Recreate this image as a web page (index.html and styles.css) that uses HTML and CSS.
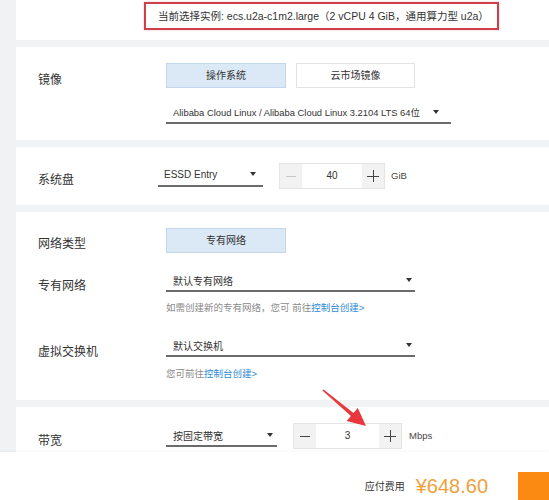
FILE: index.html
```html
<!DOCTYPE html>
<html lang="zh-CN">
<head>
<meta charset="utf-8">
<title>ECS 配置</title>
<link rel="stylesheet" href="styles.css">
</head>
<body>
<div class="page">
  <section class="panel p-current">
    <div class="current">当前选择实例: ecs.u2a-c1m2.large（2 vCPU 4 GiB，通用算力型 u2a）</div>
  </section>

  <section class="panel p-image">
    <div class="row">
      <div class="label l-image">镜像</div>
      <div class="ctrl">
        <div class="tabs">
          <span class="tab active">操作系统</span>
          <span class="tab">云市场镜像</span>
        </div>
        <div class="select s-os"><span>Alibaba Cloud Linux / Alibaba Cloud Linux 3.2104 LTS 64位</span><i class="caret"></i></div>
      </div>
    </div>
  </section>

  <section class="panel p-disk">
    <div class="row">
      <div class="label l-disk">系统盘</div>
      <div class="ctrl inline">
        <div class="select s-disk"><span>ESSD Entry</span><i class="caret"></i></div>
        <div class="stepper st-disk">
          <span class="btn minus disabled"><svg width="10" height="10" viewBox="0 0 10 10"><path d="M0 5.5H10" stroke="currentColor" stroke-width="1"/></svg></span>
          <span class="val">40</span>
          <span class="btn plus"><svg width="12" height="12" viewBox="0 0 12 12"><path d="M0 6.5H12M6.5 0V12" stroke="currentColor" stroke-width="1"/></svg></span>
        </div>
        <span class="unit">GiB</span>
      </div>
    </div>
  </section>

  <section class="panel p-net">
    <div class="row">
      <div class="label l-nettype">网络类型</div>
      <div class="ctrl">
        <div class="tabs"><span class="tab active">专有网络</span></div>
      </div>
    </div>
    <div class="row r-vpc">
      <div class="label l-vpc">专有网络</div>
      <div class="ctrl">
        <div class="select s-vpc"><span>默认专有网络</span><i class="caret"></i></div>
        <div class="hint">如需创建新的专有网络，您可 前往<a>控制台创建&gt;</a></div>
      </div>
    </div>
    <div class="row r-vsw">
      <div class="label l-vsw">虚拟交换机</div>
      <div class="ctrl">
        <div class="select s-vpc"><span>默认交换机</span><i class="caret"></i></div>
        <div class="hint">您可前往<a>控制台创建&gt;</a></div>
      </div>
    </div>
  </section>

  <section class="panel p-bw">
    <div class="row">
      <div class="label l-bw">带宽</div>
      <div class="ctrl inline">
        <div class="select s-bw"><span>按固定带宽</span><i class="caret"></i></div>
        <div class="stepper st-bw">
          <span class="btn minus"><svg width="10" height="10" viewBox="0 0 10 10"><path d="M0 5.5H10" stroke="currentColor" stroke-width="1"/></svg></span>
          <span class="val">3</span>
          <span class="btn plus"><svg width="12" height="12" viewBox="0 0 12 12"><path d="M0 6.5H12M6.5 0V12" stroke="currentColor" stroke-width="1"/></svg></span>
        </div>
        <span class="unit u-bw">Mbps</span>
      </div>
    </div>
  </section>
</div>

<footer class="footer">
  <span class="fee-label">应付费用</span>
  <span class="price">¥648.60</span>
  <span class="buy"></span>
</footer>

<svg class="arrow" width="549" height="500" viewBox="0 0 549 500">
  <polygon points="322.4,390.6 350.9,415.9 346.6,421 366,426 357.8,407.9 353.5,412.9 323.6,389.4" fill="#e8383d"/>
</svg>
</body>
</html>
```

FILE: styles.css
```css
* { box-sizing: border-box; }
html, body { margin: 0; padding: 0; }
body {
  background: #f1f2f4;
  font-family: "Liberation Sans", "Noto Sans CJK SC", sans-serif;
  color: #333;
  width: 549px;
  height: 500px;
  overflow: hidden;
  position: relative;
}
.page {
  padding-left: 16px;
  display: flex;
  flex-direction: column;
  gap: 7px;
}
.panel {
  background: #fff;
  padding-left: 22px;
}
.p-current { height: 40px; padding: 2px 0 0 128px; }
.current {
  width: 355px;
  height: 28px;
  border: 2px solid #cf3f4b;
  font-size: 10.5px;
  line-height: 24px;
  padding-left: 12px;
  color: #333;
  white-space: nowrap;
  box-shadow: 0 0 2px rgba(200,60,70,.3);
}
.p-image { height: 93px; padding-top: 16px; }
.p-disk { height: 58px; padding-top: 16px; }
.p-net { height: 188px; padding-top: 16px; }
.p-bw { height: 60px; padding-top: 16px; }

.row { display: flex; align-items: flex-start; }
.label {
  width: 128px;
  flex-shrink: 0;
  font-size: 12px;
  line-height: 14px;
  color: #333;
}
.l-image { margin-top: 10px; }
.l-disk { margin-top: 10px; }
.l-nettype { margin-top: 9px; }
.l-vpc { margin-top: 26px; }
.l-vsw { margin-top: 30px; }
.l-bw { margin-top: 11px; }

.ctrl { display: flex; flex-direction: column; }
.ctrl.inline { flex-direction: row; align-items: flex-start; }

.tabs { display: flex; gap: 10px; }
.tab {
  width: 119px;
  height: 25px;
  border: 1px solid #e3e3e3;
  font-size: 10px;
  line-height: 23px;
  text-align: center;
  color: #333;
  background: #fff;
}
.tab.active { background: #dbe8f6; border-color: #c3d6ec; width: 120px; }

.select {
  display: flex;
  align-items: center;
  justify-content: space-between;
  height: 22px;
  border-bottom: 2px solid #6b6b6b;
  font-size: 10px;
  padding: 0 7px 0 7px;
  color: #333;
  white-space: nowrap;
}
.caret {
  width: 0; height: 0;
  border-left: 3px solid transparent;
  border-right: 3px solid transparent;
  border-top: 4px solid #333;
}
.s-os { width: 285px; margin-top: 14px; padding-right: 12px; font-size: 9.4px; }
.s-disk { width: 105px; margin-left: -8px; height: 24px; padding-left: 6px; }
.s-vpc { width: 249px; margin-top: 17px; padding-right: 3px; }
.r-vsw .s-vpc { margin-top: 20px; }
.r-vsw .hint { margin-top: 10px; }
.s-bw { width: 111px; margin-top: 2px; padding-right: 4px; }

.hint {
  font-size: 9.5px;
  line-height: 14px;
  margin-top: 9px;
  color: #8a8a8a;
  white-space: nowrap;
}
.hint a { color: #2b8bd6; }

.stepper {
  display: flex;
  height: 26px;
  border: 1px solid #e4e4e4;
  margin-left: 16px;
}
.st-disk { width: 106px; }
.st-bw { width: 109px; }
.stepper .btn {
  width: 22px;
  background: #f2f2f2;
  display: flex;
  align-items: center;
  justify-content: center;
  color: #444;
}
.stepper .btn.disabled { color: #c8c8c8; }
.stepper .val {
  flex: 1;
  text-align: center;
  font-size: 10px;
  line-height: 24px;
  color: #333;
}
.unit { font-size: 9.5px; line-height: 26px; margin-left: 6px; color: #444; }
.u-bw { margin-left: 7px; }

.footer {
  position: absolute;
  left: 0; right: 0; bottom: 0;
  height: 48px;
  background: #fff;
  display: flex;
  justify-content: flex-end;
  align-items: flex-end;
  box-shadow: 0 -1px 3px rgba(0,0,0,.04);
}
.fee-label { font-size: 10px; line-height: 14px; margin: 0 11px 6px 0; color: #333; }
.price {
  font-size: 20px;
  line-height: 24px;
  color: #f0a03c;
  margin: 0 30px 2px 0;
}
.buy { width: 31px; height: 28px; background: #fb8a12; }

.arrow { position: absolute; left: 0; top: 0; pointer-events: none; }
```
